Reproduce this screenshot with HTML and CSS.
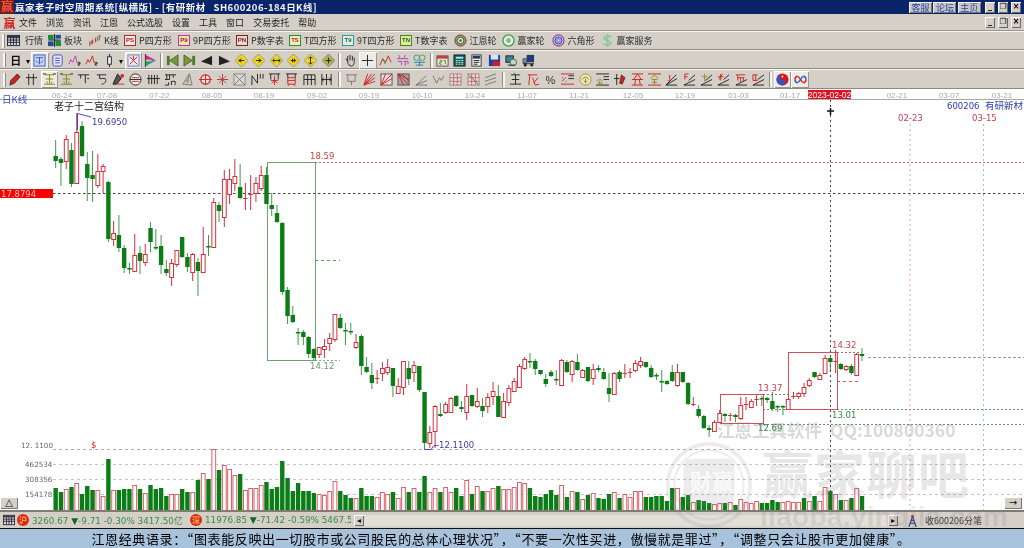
FILE: index.html
```html
<!DOCTYPE html>
<html lang="zh-CN">
<head>
<meta charset="utf-8">
<title>赢家老子时空周期系统</title>
<link rel="stylesheet" href="styles.css">
</head>
<body>
<div class="app">
  <header class="titlebar">
    <span class="logo logo-title">赢</span>
    <span class="title-text">赢家老子时空周期系统[纵横版] - [有研新材 &nbsp; SH600206-184日K线]</span>
    <span class="spring"></span>
    <span class="linkbtn">客服</span><span class="linkbtn">论坛</span><span class="linkbtn">主页</span>
    <span class="winbtns"><span class="winbtn">_</span><span class="winbtn">&#x2750;</span><span class="winbtn">×</span></span>
  </header>
  <nav class="menubar">
    <span class="logo logo-menu">赢</span>
    <span class="menuitem">文件</span><span class="menuitem">浏览</span><span class="menuitem">资讯</span><span class="menuitem">江恩</span><span class="menuitem">公式选股</span><span class="menuitem">设置</span><span class="menuitem">工具</span><span class="menuitem">窗口</span><span class="menuitem">交易委托</span><span class="menuitem">帮助</span>
    <span class="spring"></span>
    <span class="winbtns"><span class="winbtn">_</span><span class="winbtn">&#x2750;</span><span class="winbtn">×</span></span>
  </nav>

  <div class="toolbar row1">
    <span class="grip"></span>
    <span class="tool t-table"><svg class="i" viewBox="0 0 14 14"><rect x=".5" y="1.5" width="13" height="11" fill="#d8dcec" stroke="#223"/><path class="k" d="M1 4h12M1 6.5h12M1 9h12M4 4v8M7 4v8M10 4v8"/><rect x="1" y="2" width="12" height="2" fill="#334"/></svg><b>行情</b></span>
    <span class="tool t-block"><svg class="i" viewBox="0 0 14 14"><rect y="1" width="6" height="5" fill="#1b8a3a"/><rect x="8" y="1" width="6" height="4" fill="#1c4fb0"/><rect y="8" width="6" height="5" fill="#17508a"/><rect x="8" y="7" width="6" height="6" fill="#1b8a3a"/><path class="k" d="M.5 6.5h13M7 0v14"/></svg><b>板块</b></span>
    <span class="tool t-k"><svg class="i" viewBox="0 0 14 14"><path class="r" d="M2 8v5M5 6v5M8 4v5M12 1v6"/><path class="g" d="M3.5 7v4M10 3v5"/><path class="y" d="M13 1v3"/></svg><b>K线</b></span>
    <span class="tool t-p1"><i class="badge bd-red">PS</i><b>P四方形</b></span>
    <span class="tool t-p2"><i class="badge bd-mag">P9</i><b>9P四方形</b></span>
    <span class="tool t-p3"><i class="badge bd-dark">PN</i><b>P数字表</b></span>
    <span class="tool t-t1"><i class="badge bd-grn">TS</i><b>T四方形</b></span>
    <span class="tool t-t2"><i class="badge bd-teal">T9</i><b>9T四方形</b></span>
    <span class="tool t-t3"><i class="badge bd-lime">TN</i><b>T数字表</b></span>
    <span class="tool t-w1"><svg class="i" viewBox="0 0 14 14"><circle cx="7" cy="7" r="6" fill="#8fa070" stroke="#8a2a2a"/><circle cx="7" cy="7" r="3.6" fill="#e8e4c8" stroke="#2a6a3a"/><circle cx="7" cy="7" r="1.4" fill="#555"/></svg><b>江恩轮</b></span>
    <span class="tool t-w2"><svg class="i" viewBox="0 0 14 14"><circle cx="7" cy="7" r="6" fill="#e4efe0" stroke="#3a9a50" stroke-width="1.4"/><circle cx="7" cy="7" r="2.6" fill="#7fbf80"/></svg><b>赢家轮</b></span>
    <span class="tool t-w3"><svg class="i" viewBox="0 0 14 14"><circle cx="7" cy="7" r="6" fill="#d8c8e8" stroke="#a03a8a" stroke-width="1.2"/><circle cx="7" cy="7" r="3.8" fill="#8fb0e0" stroke="#2a4ab0"/><circle cx="7" cy="7" r="1.4" fill="#e8e8f8" stroke="#a03a8a" stroke-width=".6"/></svg><b>六角形</b></span>
    <span class="tool t-w4"><svg class="i" viewBox="0 0 14 14"><path d="M11 3.5C9 1.5 3.500 2 3.500 4.500S10.500 7 10.500 9.500 5 12.500 3 10.500M7 0v14" fill="none" stroke="#8fc89a" stroke-width="2"/></svg><b>赢家服务</b></span>
  </div>

  <div class="toolbar icons row2">
    <span class="grip"></span>
    <span class="ic txt">日</span><span class="caret">▾</span>
    <span class="ic on"><svg class="i" viewBox="0 0 14 14"><rect x="1" y="1" width="12" height="12" fill="#c8d4f4" stroke="#3a58c0"/><path class="b" d="M3 4h8M3 7l3 3M11 7l-3 3M7 4v7"/></svg></span>
    <span class="ic"><svg class="i" viewBox="0 0 14 14"><rect x="2" y="1" width="10" height="12" rx="2" fill="#e4e4f4" stroke="#4a4ac0"/><path class="b" d="M4.500 4.500h5M4.500 7h5M4.500 9.500h5"/></svg></span>
    <span class="ic"><svg class="i" viewBox="0 0 14 14"><path class="m" d="M1 11l2-5 2 3 3-7 2 8"/><path class="k" d="M11 9h2v1.500h-2v1.500h2"/></svg></span>
    <span class="ic"><svg class="i" viewBox="0 0 14 14"><path class="r" d="M1 11l2-5 2 3 3-7 2 8"/><path class="k" d="M11 9h2v1.500h-2v1.500h2"/></svg></span>
    <span class="ic"><svg class="i" viewBox="0 0 14 14"><path class="k" d="M7 0v14"/><rect x="5" y="3" width="4" height="8" fill="#eee" stroke="#222"/></svg></span><span class="caret">▾</span>
    <span class="ic on"><svg class="i" viewBox="0 0 14 14"><rect x="1" y="1" width="12" height="12" fill="#e8e8f0" stroke="#6a7ab0"/><path class="r" stroke-width="1.400" d="M3 3l8 8M11 3l-8 8M7 2v4"/></svg></span>
    <span class="ic"><svg class="i" viewBox="0 0 14 14"><path class="k" d="M1.500 0v14"/><path d="M2 1l11 6H2z" fill="#d020a0"/><path d="M2 7h11L2 13z" fill="#10a0a0"/><path d="M2 6h6v2H2z" fill="#e8d020"/></svg></span>
    <span class="sep s4"></span>
    <span class="ic"><svg class="i" viewBox="0 0 14 14"><path d="M1 2h3v10H1z" fill="#4a7a2a"/><path d="M13 1v12L4 7z" fill="#7a9a30" stroke="#222" stroke-width=".6"/></svg></span>
    <span class="ic"><svg class="i" viewBox="0 0 14 14"><path d="M10 2h3v10h-3z" fill="#4a7a2a"/><path d="M1 1v12l9-6z" fill="#7a9a30" stroke="#222" stroke-width=".6"/></svg></span>
    <span class="ic"><svg class="i" viewBox="0 0 14 14"><path d="M13 2v10L1 8z" fill="#222"/></svg></span>
    <span class="ic"><svg class="i" viewBox="0 0 14 14"><path d="M1 2v10l12-4z" fill="#222"/></svg></span>
    <span class="ic"><svg class="i" viewBox="0 0 14 14"><use href="#dia"/><path class="k" d="M4 7h6M7 5l-3 2 3 2"/></svg></span>
    <span class="ic"><svg class="i" viewBox="0 0 14 14"><use href="#dia"/><path class="k" d="M4 7h6M7 5l3 2-3 2"/></svg></span>
    <span class="ic"><svg class="i" viewBox="0 0 14 14"><use href="#dia"/><path class="k" d="M3 7h8M5 5L3 7l2 2M9 5l2 2-2 2"/></svg></span>
    <span class="ic"><svg class="i" viewBox="0 0 14 14"><use href="#dia"/><path class="k" stroke-width="1.500" d="M4 7h6M6 5v4M8 5v4"/></svg></span>
    <span class="ic"><svg class="i" viewBox="0 0 14 14"><use href="#dia"/><path class="k" d="M7 3v8M5 5l2-2 2 2M5 9l2 2 2-2"/></svg></span>
    <span class="ic"><svg class="i" viewBox="0 0 14 14"><path d="M7 0l7 7-7 7-7-7z" fill="#b0b050" stroke="#666" stroke-width=".6"/><path class="k" d="M4 7h6M7 4v6"/></svg></span>
    <span class="sep s6"></span>
    <span class="ic"><svg class="i" viewBox="0 0 14 14"><path class="k" d="M4 8L2 5M4 8V2M6.500 7V1M9 7V2M11 8V4M4 8c0 3 2 5 4 5s3-2 3-5"/></svg></span>
    <span class="ic on"><svg class="i" viewBox="0 0 14 14"><path class="k" d="M7 1v12M1 7h12"/></svg></span>
    <span class="ic"><svg class="i" viewBox="0 0 14 14"><path class="r" stroke-width="1.200" d="M1 12l3-7 3 4 3-7 3 7"/><path class="g" d="M4 5l3 6"/></svg></span>
    <span class="ic"><svg class="i" viewBox="0 0 14 14"><path class="m" stroke-width="1.200" d="M3 1l1 3M10 1L9 4M1 5h12M2 8h4v4M8 8h5v3M10 8v5"/></svg></span>
    <span class="ic"><svg class="i" viewBox="0 0 14 14"><circle cx="4" cy="4" r="3" fill="none" stroke="#2a9a8a"/><circle cx="10" cy="4" r="3" fill="none" stroke="#40a050"/><path d="M1 9h12M3 12h8M7 7v6" stroke="#3080a0" fill="none"/></svg></span>
    <span class="sep s5"></span>
    <span class="ic"><svg class="i" viewBox="0 0 14 14"><rect x="1" y="2" width="12" height="11" fill="#f0e4d0" stroke="#555"/><rect x="1" y="2" width="12" height="3" fill="#c04040"/><path class="g" d="M4 7h2v2H4v2h2M8 7h2v4"/></svg></span>
    <span class="ic"><svg class="i" viewBox="0 0 14 14"><rect x="1" y="1" width="12" height="12" fill="#155a60" stroke="#222"/><rect x="3" y="3" width="8" height="2" fill="#aee"/><path d="M3 7h2M6 7h2M9 7h2M3 9h2M6 9h2M9 9h2M3 11h2M6 11h2M9 11h2" stroke="#cfc"/></svg></span>
    <span class="ic"><svg class="i" viewBox="0 0 14 14"><rect x="2" y="1" width="10" height="12" fill="#eee" stroke="#334"/><rect x="3" y="2" width="8" height="3" fill="#223a6a"/><path class="k" d="M4 7h6M4 9h6M4 11h4"/></svg></span>
    <span class="ic"><svg class="i" viewBox="0 0 14 14"><rect x="1" y="1" width="12" height="12" fill="#1a3fb0"/><rect x="3" y="1" width="8" height="5" fill="#e4e4e4"/><rect x="5" y="8" width="8" height="5" fill="#d02020"/></svg></span>
    <span class="ic"><svg class="i" viewBox="0 0 14 14"><rect x="1" y="2" width="8" height="7" fill="#4080a0" stroke="#222"/><circle cx="9" cy="9" r="3.500" fill="#c8d8c0" stroke="#2a7a3a"/><path class="k" d="M3 12h8"/></svg></span>
    <span class="ic"><svg class="i" viewBox="0 0 14 14"><rect x="5" y="1" width="8" height="8" fill="#223a7a"/><path d="M1 5h4v5H1z" fill="#7a8aa0" stroke="#222" stroke-width=".6"/><path class="k" d="M1 10.500h12"/><circle cx="3.500" cy="12" r="1.500" fill="#222"/><circle cx="10.500" cy="12" r="1.500" fill="#222"/></svg></span>
  </div>

  <div class="toolbar icons row3">
    <span class="grip"></span>
    <span class="ic"><svg class="i" viewBox="0 0 14 14"><path d="M10 1l3 3-6 7-5 2 1-5z" fill="#d02020" stroke="#222" stroke-width=".8"/></svg></span>
    <span class="ic"><svg class="i" viewBox="0 0 14 14"><path class="k" d="M4 1v12M9 1v12M1 5h12"/></svg></span>
    <span class="ic on"><svg class="i" viewBox="0 0 14 14"><use href="#wang" class="y"/></svg></span>
    <span class="ic"><svg class="i" viewBox="0 0 14 14"><use href="#wang" class="y"/></svg></span>
    <span class="ic"><svg class="i" viewBox="0 0 14 14"><path class="k" d="M1 2h12M4 2v4M9 2v9M11 6h2"/></svg></span>
    <span class="ic"><svg class="i" viewBox="0 0 14 14"><path class="k" d="M2 2h10M5 2v4h6c2 3-1 6-4 6"/></svg></span>
    <span class="ic"><svg class="i" viewBox="0 0 14 14"><path d="M6 1l4 5-5 6H1z" fill="#555" stroke="#222"/><circle cx="11" cy="3" r="2" fill="#e02020"/><path class="r" d="M6 12h7"/></svg></span>
    <span class="ic"><svg class="i" viewBox="0 0 14 14"><circle cx="7" cy="7" r="6" fill="#f4f0f0" stroke="#222"/><path class="k" d="M1 7h12"/><path class="r" d="M3 5h8M3 9h8"/></svg></span>
    <span class="ic"><svg class="i" viewBox="0 0 14 14"><path class="k" d="M2 2v10M5 2v10M8 2v10M11 2v10M0 6h14"/></svg></span>
    <span class="ic"><svg class="i" viewBox="0 0 14 14"><path class="k" d="M1 2h12M3 2v5M6 2v5M10 2v3M1 7h5M1 13h4V10M8 13V9h4v4"/></svg></span>
    <span class="ic"><svg class="i" viewBox="0 0 14 14"><path class="gy" d="M9 1L2 12l10 1zM9 1l-2 8"/><circle cx="7" cy="9" r="1.500" fill="none" stroke="#888"/></svg></span>
    <span class="ic"><svg class="i" viewBox="0 0 14 14"><circle cx="7" cy="7" r="5" fill="#f6e0e0" stroke="#c82020" stroke-width="1.300"/><path class="r" d="M0 7h14M7 2v10"/></svg></span>
    <span class="ic"><svg class="i" viewBox="0 0 14 14"><path class="r" d="M7 1v12M1 7h12"/><path class="gy" d="M3 3l8 8M11 3l-8 8"/></svg></span>
    <span class="ic"><svg class="i" viewBox="0 0 14 14"><rect x="1" y="1" width="12" height="12" fill="#d8d8d8" stroke="#888"/><path class="gy" d="M1 1l12 12M13 1L1 13"/></svg></span>
    <span class="ic"><svg class="i" viewBox="0 0 14 14"><path class="k" d="M1 13V3l6 8V1M10 1v5M13 1v5"/></svg></span>
    <span class="ic"><svg class="i" viewBox="0 0 14 14"><path class="k" d="M1 1h12M3 1v6M11 1v6"/><path class="r" stroke-width="1.300" d="M7 3v10M3 8h8M4 11l3-3 3 3"/></svg></span>
    <span class="ic"><svg class="i" viewBox="0 0 14 14"><path class="k" d="M1 1h12M3 1v4M11 1v4"/><path class="r" stroke-width="1.300" d="M3 5h8v7H3zM3 8h8M5 12l-2 2M9 12l2 2"/></svg></span>
    <span class="ic"><svg class="i" viewBox="0 0 14 14"><path class="k" d="M1 2h12M1 13V2M5 2v11M9 2v11M13 2v11M1 7h12"/></svg></span>
    <span class="ic"><svg class="i" viewBox="0 0 14 14"><path class="k" d="M2 1v12M12 1v12M7 1v12M2 7h10M4 5L2 7l2 2M10 5l2 2-2 2"/></svg></span>
    <span class="sep s8"></span>
    <span class="ic"><svg class="i" viewBox="0 0 14 14"><path class="gy" d="M1 2h12M3 2v7h8V2M7 9v4"/></svg></span>
    <span class="ic"><svg class="i" viewBox="0 0 14 14"><path class="r" d="M1 13L13 1M1 13L13 5M1 13L13 9M1 13L9 1M1 13L5 1"/></svg></span>
    <span class="ic"><svg class="i" viewBox="0 0 14 14"><rect x="1" y="1" width="12" height="12" fill="#ecd8d8" stroke="#555"/><path class="r" d="M1 13L13 1M1 13L13 6M1 13L6 1"/></svg></span>
    <span class="ic"><svg class="i" viewBox="0 0 14 14"><rect x="1" y="1" width="12" height="12" fill="#a8a0a8" stroke="#555"/><path class="r" d="M1 1L13 13M1 1L13 7M1 1L7 13M5 1l8 8"/></svg></span>
    <span class="ic"><svg class="i" viewBox="0 0 14 14"><path class="gy" d="M1 13h12M1 13L12 3M1 13l12-5"/></svg></span>
    <span class="ic"><svg class="i" viewBox="0 0 14 14"><path class="gy" d="M1 3l4 8 3-6 2 3 3-5"/></svg></span>
    <span class="ic"><svg class="i" viewBox="0 0 14 14"><use href="#pink"/></svg></span>
    <span class="ic"><svg class="i" viewBox="0 0 14 14"><use href="#pink"/><path class="gy" d="M1 1l12 12"/></svg></span>
    <span class="ic"><svg class="i" viewBox="0 0 14 14"><path class="gy" d="M1 5l12-4M1 9l12-4M1 13l12-4"/></svg></span>
    <span class="sep s8"></span>
    <span class="ic"><svg class="i" viewBox="0 0 14 14"><path class="k" d="M2 2h10M3 7h8M1 12h12M7 2v10M5 0l2 2"/></svg></span>
    <span class="ic"><svg class="i" viewBox="0 0 14 14"><path class="r" stroke-width="1.200" d="M1 2h10M3 2L2 13M6 5l3 8 4-1M7 11l5-6"/></svg></span>
    <span class="ic pct">%</span>
    <span class="ic"><svg class="i" viewBox="0 0 14 14"><path class="k" d="M8 3h6M8 6h6"/><path class="r" d="M0 1h14M0 12h14M1 9l4-4M1 5h1M5 9h1"/></svg></span>
    <span class="ic"><svg class="i" viewBox="0 0 14 14"><circle cx="7" cy="7" r="6" fill="#f0e8b8" stroke="#a09040"/><path class="y" d="M3 7l4-3 4 3M5 9h4M7 6v5"/></svg></span>
    <span class="ic"><svg class="i" viewBox="0 0 14 14"><path class="k" d="M0 1h14M8 4h6M8 7h6"/><path class="y" stroke-width="1.300" d="M1 9l3-3 3 3M2 11h5M4 8v4"/><path class="k" d="M0 13h14"/></svg></span>
    <span class="ic"><svg class="i" viewBox="0 0 14 14"><path class="k" stroke-width="1.400" d="M4 1v12M1 6h6"/><path d="M9 2l4 3-3 7-3-1z" fill="#d02020" stroke="#222" stroke-width=".6"/></svg></span>
    <span class="ic"><svg class="i" viewBox="0 0 14 14"><path class="r" d="M1 1h12M1 13h12M1 7h12M7 1L3 7M7 1l4 6M5 7l-1 6M9 7l1 6"/></svg></span>
    <span class="ic"><svg class="i" viewBox="0 0 14 14"><path class="r" d="M0 1h14M0 13h14"/><path class="y" stroke-width="1.200" d="M7 2L3 6M7 2l4 4M4 7h6M7 7v5M4 10h6"/></svg></span>
    <span class="ic"><svg class="i" viewBox="0 0 14 14"><path class="k" d="M1 13h12M1 13L13 6M1 13L12 2"/><path class="r" d="M5 2v5c0 2-2 2-2 1"/></svg></span>
    <span class="ic"><svg class="i" viewBox="0 0 14 14"><path class="k" d="M1 13h12M1 13L13 7M6 8l7-6"/><path class="r" stroke-width="1.300" d="M2 7V1h4M2 4h3"/></svg></span>
    <span class="ic"><svg class="i" viewBox="0 0 14 14"><path class="k" d="M1 13h12M1 13L13 7M6 8l7-6"/><path class="y" stroke-width="1.300" d="M5 1v8M2 3l3 2 3-2"/></svg></span>
    <span class="ic"><svg class="i" viewBox="0 0 14 14"><path class="k" d="M1 13h12M1 13L13 7M7 7l6-5"/><path class="r" stroke-width="1.300" d="M4 1v7M1 4h6M6 1L2 7"/></svg></span>
    <span class="ic"><svg class="i" viewBox="0 0 14 14"><path class="k" d="M1 13h12M1 13L13 7"/><path class="r" stroke-width="1.200" d="M1 2h10M3 2v6M3 5h7M6 5v5M9 5v4"/></svg></span>
    <span class="ic"><svg class="i" viewBox="0 0 14 14"><path class="k" d="M1 13h12M1 13L13 7M6 7l7-5"/><path class="r" stroke-width="1.200" d="M1 2h5M1 2v6h5M4 2v6"/></svg></span>
    <span class="sep s7"></span>
    <span class="ic on"><svg class="i" viewBox="0 0 14 14"><circle cx="7" cy="7" r="6.500" fill="#d81818"/><path d="M7 .5a6.500 6.500 0 0 0 0 13 3.250 3.250 0 0 0 0-6.500 3.250 3.250 0 0 1 0-6.500z" fill="#2a5ac0"/><circle cx="7" cy="3.800" r="1" fill="#fff"/><circle cx="7" cy="10.200" r="1" fill="#d81818"/></svg></span>
    <span class="ic on"><svg class="i" viewBox="0 0 14 14"><path d="M1 7c1-5 4-4 6 0s5 5 6 0" fill="none" stroke="#e02020" stroke-width="1.600"/><path d="M1 7c1 5 4 4 6 0s5-5 6 0" fill="none" stroke="#2a5ac0" stroke-width="1.600"/></svg></span>
  </div>

  <main class="chart">
    <svg class="chart-svg" id="chart" viewBox="0 89 1024 421" width="1024" height="421" xmlns="http://www.w3.org/2000/svg">
      <g id="static"></g>
      <g id="bars"></g>
      <g id="candles"></g>
    </svg>
    <span class="sizebtn sb-left">△</span>
    <span class="sizebtn sb-right">→</span>
  </main>

  <footer class="statusbar">
    <svg class="i st-cal" viewBox="0 0 14 14"><rect x=".5" y="1.500" width="13" height="11" fill="#d8dcec" stroke="#223"/><rect x="1" y="2" width="12" height="2" fill="#334"/><path class="k" d="M1 6h12M1 8.500h12M4 4v8M7 4v8M10 4v8"/></svg>
    <span class="mkt">沪</span>
    <span class="idx i1">3260.67 <em>▼</em>-9.71 -0.30% 3417.50亿</span>
    <span class="mkt m2">深</span>
    <span class="idx i2">11976.85 <em>▼</em>-71.42 -0.59% 5467.5</span>
    <div class="scroll">
      <span class="sarrow">◂</span><span class="strack"></span><span class="sarrow">▸</span>
    </div>
    <svg class="i st-tower" viewBox="0 0 14 14"><path d="M7 3L3 14M7 3l4 11M4.500 10h5M5.500 7h3" fill="none" stroke="#2a3a8a" stroke-width="1.200"/><circle cx="7" cy="2.500" r="1.500" fill="#d02020"/></svg>
    <span class="tick">收600206分笔</span>
  </footer>

  <div class="quote">江恩经典语录：“图表能反映出一切股市或公司股民的总体心理状况”，“不要一次性买进，傲慢就是罪过”，“调整只会让股市更加健康”。</div>
</div>

<div class="wm wm-line">江恩工具软件 &nbsp;QQ:100800360</div>
<svg class="wm wm-ring" viewBox="0 0 96 96" xmlns="http://www.w3.org/2000/svg"><circle cx="48" cy="48" r="44" fill="none" stroke="#8a8a8a" stroke-width="4"/><circle cx="48" cy="48" r="37" fill="none" stroke="#8a8a8a" stroke-width="2"/><rect x="21" y="20" width="54" height="50" rx="8" fill="#8a8a8a"/></svg>
<div class="wm wm-seal">财赢</div>
<div class="wm wm-big">赢家聊吧</div>
<div class="wm wm-url">liaoba.yingjia.com</div>

<svg class="sprites" width="0" height="0" xmlns="http://www.w3.org/2000/svg">
  <symbol id="dia" viewBox="0 0 14 14"><path d="M7 0l7 7-7 7-7-7z" fill="#f0d820" stroke="#777" stroke-width=".7"/></symbol>
  <symbol id="wang" viewBox="0 0 14 14"><path d="M2 2h10M3 6.500h8M1 12h12M7 2v10M4 9l1 2M10 9l-1 2" fill="none" stroke="#8a8a20" stroke-width="1.100"/><path d="M0 1h3M11 1h3" stroke="#222" fill="none"/></symbol>
  <symbol id="pink" viewBox="0 0 14 14"><rect x="1" y="1" width="12" height="12" fill="#ecd8d8" stroke="#b08080"/><path d="M1 5h12M1 9h12M5 1v12M9 1v12" stroke="#b07070" fill="none"/></symbol>
</svg>
<script src="chart.js"></script>
</body>
</html>
```

FILE: styles.css
```css
html, body { margin: 0; padding: 0; width: 1024px; height: 548px; overflow: hidden; background: #d4d0c8; }
body { position: relative; font-family: "Noto Sans CJK SC", "Liberation Sans", sans-serif; color: #222; font-size: 9px; }
.app { display: flex; flex-direction: column; width: 1024px; height: 548px; filter: blur(.3px); }
.spring { flex: 1; }
.sprites { position: absolute; }

.titlebar { display: flex; align-items: center; height: 14px; background: #0a246a; color: #f4f4f4; flex: none; }
.logo { color: #d01818; font-weight: 700; line-height: 1; text-align: center; }
.logo-title { width: 14px; font-size: 12px; background: #70201a; color: #ff5040; height: 14px; margin-right: 1px; }
.title-text { font-size: 9.500px; font-weight: 700; letter-spacing: .46px; white-space: pre; line-height: 14px; }
.linkbtn { width: 23px; height: 11px; margin: 0 1.300px 0 0; background: #c8c6c0; color: #2a3fa8; font-size: 9px; line-height: 11px; text-align: center; box-shadow: inset 1px 1px #f4f4f4, inset -1px -1px #777; }
.winbtns { display: flex; gap: 3px; margin-left: 3px; margin-right: 3px; }
.winbtn { width: 10px; height: 11px; background: #d4d0c8; color: #000; font-family: "DejaVu Sans", sans-serif; font-size: 8px; font-weight: 700; line-height: 10px; text-align: center; box-shadow: inset 1px 1px #fff, inset -1px -1px #666; }

.menubar { display: flex; align-items: center; height: 17px; flex: none; gap: 9px; padding-top: 1px; box-sizing: border-box; border-bottom: 1px solid #9a968c; }
.logo-menu { width: 13px; font-size: 12px; margin: 0 -6px 0 3px; }
.menuitem { font-size: 9px; line-height: 14px; white-space: nowrap; color: #1c1c1c; }

.toolbar { display: flex; align-items: center; height: 19px; flex: none; box-sizing: border-box; border-top: 1px solid #f6f5f1; border-bottom: 1px solid #8e8a80; }
.grip { width: 2px; height: 14px; margin-left: 2px; background: #f6f5f1; border-right: 1px solid #8e8a80; flex: none; }
.i { width: 13px; height: 13px; display: block; flex: none; }
.k, .r, .g, .y, .m, .b, .gy { fill: none; stroke-width: 1; }
.k { stroke: #222; } .r { stroke: #d02020; } .g { stroke: #2a8a3a; } .y { stroke: #8a8a20; } .m { stroke: #b040b0; } .b { stroke: #3a50c0; } .gy { stroke: #777; }

.tool { display: flex; align-items: center; gap: 3px; flex: none; box-sizing: border-box; }
.tool b { font-weight: 400; font-size: 9px; color: #2a2a2a; white-space: nowrap; }
.badge { display: block; width: 12px; height: 11px; box-sizing: border-box; border: 1px solid; font-style: normal; font-weight: 700; font-family: "Liberation Sans", sans-serif; font-size: 6px; line-height: 9px; text-align: center; }
.bd-red { border-color: #b02a2a; color: #a02020; background: #f6e8e4; }
.bd-mag { border-color: #c030c0; color: #802080; background: #f4e890; }
.bd-dark { border-color: #802020; color: #802020; background: #e8dcd0; }
.bd-grn { border-color: #2a8a3a; color: #c02020; background: #eef0b8; }
.bd-teal { border-color: #20a0a0; color: #106060; background: #f0e8e0; }
.bd-lime { border-color: #3a8a2a; color: #1a6a2a; background: #e8e890; }
.t-table { margin-left: 2px; width: 41px; gap: 5px; }
.t-block { width: 40px; }
.t-k { width: 36px; }
.t-p1 { width: 54px; }
.t-p2 { width: 58px; }
.t-p3 { width: 53px; }
.t-t1 { width: 53px; }
.t-t2 { width: 58px; }
.t-t3 { width: 53.500px; }
.t-w1 { width: 48px; }
.t-w2 { width: 50px; }
.t-w3 { width: 49px; }
.t-w4 { width: 56px; }

.icons { padding-left: 1px; padding-top: 1px; }
.row3 { height: 20px; }
.ic { width: 17.330px; height: 17px; display: flex; align-items: center; justify-content: center; flex: none; box-sizing: border-box; }
.ic.on { background: #ecebe6; box-shadow: inset 1px 1px #fff, inset -1px -1px #9a968c; }
.ic.txt { font-weight: 700; font-size: 11px; color: #111; margin-left: 1px; }
.ic.pct { font-family: "Liberation Sans", sans-serif; font-size: 11px; color: #333; }
.caret { width: 7px; font-size: 8px; text-align: center; color: #111; flex: none; }
.sep { height: 15px; flex: none; }
.sep::before { content: ""; display: block; width: 2px; height: 15px; margin: 0 auto; background: #f6f5f1; border-left: 1px solid #8e8a80; }
.s4 { width: 4px; } .s5 { width: 5px; } .s6 { width: 5px; } .s7 { width: 7px; } .s8 { width: 8px; }

.chart { position: relative; flex: none; height: 421px; background: #fff; }
.chart-svg { display: block; }
.sizebtn { position: absolute; bottom: 1px; height: 12px; width: 18px; background: #d4d0c8; box-shadow: inset 1px 1px #fff, inset -1px -1px #777; color: #111; text-align: center; font-family: "DejaVu Sans", sans-serif; font-size: 10px; line-height: 12px; }
.sb-left { left: 0; }
.sb-right { right: 2px; }

.statusbar { display: flex; align-items: center; height: 18px; flex: none; box-sizing: border-box; border-top: 2px solid #807c74; padding-left: 3px; background: #d4d0c8; }
.st-cal { width: 12px; height: 12px; }
.mkt { width: 12px; height: 12px; border-radius: 50%; background: #e02818; color: #f4e060; font-size: 8px; line-height: 12px; text-align: center; margin-left: 2px; flex: none; }
.m2 { margin-left: 0; }
.idx { font-family: "DejaVu Sans", sans-serif; font-size: 8.800px; color: #3a8a4a; white-space: nowrap; flex: none; margin-left: 3px; }
.idx em { font-style: normal; color: #0a6a1a; font-size: 9px; }
.i1 { width: 158px; }
.i2 { width: 146px; overflow: hidden; }
.scroll { display: flex; width: 544px; height: 11px; margin-left: 3px; flex: none; }
.sarrow { width: 10px; background: #d4d0c8; box-shadow: inset 1px 1px #fff, inset -1px -1px #666; color: #111; font-family: "DejaVu Sans", sans-serif; font-size: 8px; line-height: 11px; text-align: center; flex: none; }
.strack { flex: 1; background: #e2dfd8; }
.st-tower { margin-left: 8px; }
.tick { margin-left: 6px; font-size: 9px; color: #3a3a3a; white-space: nowrap; }

.quote { flex: 1; background: #a9c2dc; border-top: 1px solid #111; color: #000; font-size: 13px; letter-spacing: .62px; line-height: 19px; text-align: center; white-space: nowrap; padding-right: 22px; }

.wm { position: absolute; pointer-events: none; white-space: nowrap; }
.wm-line { left: 717px; top: 420px; font-size: 17.500px; font-weight: 700; line-height: 20px; color: rgba(120,120,120,.28); }
.wm-ring { left: 662px; top: 440px; width: 94px; height: 90px; opacity: .16; }
.wm-seal { left: 687px; top: 460px; width: 50px; text-align: center; font-size: 22px; line-height: 40px; font-weight: 700; color: rgba(255,255,255,.7); }
.wm-big { left: 762px; top: 441px; font-size: 51px; font-weight: 700; line-height: 62px; letter-spacing: 1px; color: rgba(120,120,120,.18); }
.wm-url { left: 760px; top: 500px; height: 28px; overflow: hidden; font-family: "Liberation Sans", sans-serif; font-size: 28px; font-weight: 700; line-height: 34px; letter-spacing: .3px; color: rgba(120,120,120,.16); }

.tx { font-family: "DejaVu Sans", sans-serif; font-size: 8.500px; }
.tx-sm { font-family: "DejaVu Sans", sans-serif; font-size: 7.200px; }
.ax { font-family: "Liberation Sans", sans-serif; font-size: 8px; fill: #a8a8a8; text-anchor: middle; }
.cj { font-family: "Noto Sans CJK SC", sans-serif; font-size: 9.500px; }
.cj-lg { font-family: "Noto Sans CJK SC", sans-serif; font-size: 10px; }
```

FILE: chart.js
```js
// [type, high, bodyTop, bodyBottom, low]  (page y coordinates)
var K = "g 140 156 161 168,g 157 159 163 186,r 135 139 161 169,g 143 150 184 187,r 113 132 183 183,g 121 126 156 157,g 152 164 178 201,g 151 175 179 202,r 154 171 185 188,r 164 166 171 193,g 181 182 239 242,r 221 233 239 246,g 215 235 248 252,g 245 248 268 273,g 263 268 269 274,r 234 255 271 272,g 246 253 261 274,r 244 254 262 266,g 222 228 242 252,g 229 247 248 250,g 235 246 265 274,g 260 269 273 276,r 259 263 277 286,r 250 250 264 267,g 237 237 257 258,g 253 257 267 272,r 253 254 272 281,g 258 262 271 296,r 227 254 272 272,g 235 246 247 256,r 198 202 247 247,g 202 205 211 222,r 170 179 217 227,r 169 179 194 204,r 159 176 183 191,g 164 187 198 199,r 183 198 199 210,r 175 194 195 210,r 177 183 193 202,r 166 175 188 191,g 167 175 204 204,g 193 205 209 216,g 205 213 222 223,g 222 223 292 295,g 287 290 316 324,g 306 315 322 323,g 328 332 333 345,g 330 332 337 345,g 336 337 354 358,g 348 349 358 360,r 347 347 354 358,r 339 346 349 358,r 333 338 343 351,r 314 314 339 342,g 314 318 328 329,g 323 330 331 345,g 323 331 332 335,r 334 342 347 349,g 334 336 366 375,g 357 367 372 373,g 363 375 383 389,r 370 378 379 384,r 362 368 373 381,r 359 367 372 375,g 368 368 386 397,r 378 386 393 394,r 361 361 387 395,g 361 368 379 385,r 361 365 372 382,g 366 366 390 392,g 392 392 443 449,r 426 432 443 448,r 405 406 431 448,g 403 414 416 417,r 402 404 412 414,r 397 398 412 413,g 395 396 406 407,g 401 407 409 412,r 384 396 412 420,g 395 395 406 407,r 388 401 406 408,g 398 406 411 417,r 393 397 406 413,r 382 391 396 405,g 385 396 417 417,r 393 401 417 418,r 385 388 402 406,r 378 381 391 392,r 364 366 387 388,r 357 359 368 370,g 353 361 362 368,g 359 361 369 375,g 370 370 374 375,g 374 379 384 387,g 370 372 376 377,g 370 379 380 385,r 359 360 385 385,g 360 362 372 373,r 360 361 374 382,g 354 362 370 371,r 369 370 377 378,g 367 367 381 382,r 364 369 378 385,g 365 368 370 372,g 368 372 379 380,g 373 388 394 402,r 372 373 394 395,g 370 372 379 382,r 364 373 374 378,r 368 372 373 378,r 360 363 370 372,r 357 361 365 368,g 362 362 367 368,g 365 368 377 378,g 373 375 376 380,g 370 381 382 392,g 380 381 384 385,g 365 372 381 382,r 364 372 385 387,g 372 372 382 383,g 382 383 404 405,r 397 404 405 406,g 405 409 416 418,g 415 416 428 429,g 425 428 430 437,r 420 422 431 432,r 410 413 422 423,g 413 414 416 422,r 413 415 416 421,g 414 415 417 422,r 397 405 418 420,r 397 404 405 410,r 399 401 407 408,r 395 399 400 406,g 396 398 399 406,g 397 398 400 403,g 392 401 409 411,g 405 406 407 412,g 405 406 407 415,r 399 399 409 409,r 392 396 397 399,r 392 393 396 399,r 383 387 393 397,r 378 380 385 387,g 372 372 377 378,r 373 375 379 380,r 355 358 373 374,g 355 358 362 372,r 350 361 362 373,g 363 364 369 370,r 365 366 369 371,g 364 366 373 375,r 353 354 375 375,g 348 354 356 361".split(",");

// volume: type + bar-top offset, in two runs measured from different bases
var V1 = "g175 g187 r178 g170 r160 g192 g167 g180 r181 r198 g87 r181 g180 g176 g176 r166 g178 r190 g165 g176 g174 g198 r192 r192 g178 g187 r185 g150 r128 g148 r58 g120 r106 r118 r135 g133 r181 r175 r175 r165 g157 g176 g171 g92 g145 g184 g160 g184 g184 g188 r193 r196 r183 r153 g182 g195 g205 r205 g175 g198 g198 r202 r185 r193 g187 r203 r172 g187 r175 g187 g138 r187 r175 g185 r172 r185 g175 g198 r150 g192 r167 g183 r183 r175 g167 r178 r178".split(" ");
var V2 = "r262 r245 r248 g265 g287 g292 g282 g270 g285 r255 g290 r272 g277 r298 g285 r280 g295 g297 g282 r275 g293 r282 r292 r273 r273 g292 g292 g287 g287 g302 g265 r265 g290 g285 r307 g300 g303 g308 r312 r308 g310 r307 g315 r298 r305 r310 r303 g308 g308 g300 g306 r306 r303 r306 r306 g295 r303 g288 r302 r260 g273 r283 g300 r300 g295 r265 g288".split(" ");
var V = V1.map(function (s) { return [s[0], 430 + s.slice(1) / 3]; })
  .concat(V2.map(function (s) { return [s[0], 400 + s.slice(1) / 3]; }));

var NS = "http://www.w3.org/2000/svg";
var GREEN = "#0b7d16", GWICK = "#3f9a4a", RED = "#d2303c";

function el(parent, name, attrs, text) {
  var n = document.createElementNS(NS, name);
  for (var a in attrs) n.setAttribute(a, attrs[a]);
  if (text) n.textContent = text;
  parent.appendChild(n);
  return n;
}
function cx(i) { return 55.67 + 5.27 * i; }
function line(g, x1, y1, x2, y2, color, dash, w) {
  var a = { x1: x1, y1: y1, x2: x2, y2: y2, stroke: color, "stroke-width": w || 1 };
  if (dash) a["stroke-dasharray"] = dash;
  el(g, "line", a);
}
function txt(g, x, y, s, color, cls) {
  el(g, "text", { x: x, y: y, fill: color, "class": cls || "tx" }, s);
}

var st = document.getElementById("static");
var cg = document.getElementById("candles");
var vg = document.getElementById("bars");

// date axis
line(st, 0, 99.5, 1024, 99.5, "#a8a8a8");
[["06-24",62],["07-08",107],["07-22",159.5],["08-05",212],["08-19",264],["09-02",317],["09-19",369],["10-10",422],["10-24",475],["11-07",527],["11-21",579],["12-05",633],["12-19",685],["01-03",738.5],["01-17",790],["02-21",897],["03-07",949],["03-21",1002]].forEach(function (d) {
  txt(st, d[1], 98, d[0], "#a8a8a8", "ax");
});
el(st, "rect", { x: 808, y: 90, width: 43, height: 9, fill: "#e01020" });
el(st, "text", { x: 829.5, y: 98, "class": "ax", style: "fill:#fff;font-size:8.5px" }, "2023-02-02");

// grid / dashed lines
var D = "3 3";
line(st, 53, 193.5, 1024, 193.5, "#444", "2.5 2.5");
line(st, 53, 449.5, 1024, 449.5, "#b0b0b0", D);
[464.5, 479.5, 494.5].forEach(function (y) { line(st, 53, y, 1024, y, "#c4c4c4", D); });
line(st, 315, 162.5, 1024, 162.5, "#d85a64", "2 2");
line(st, 315, 260.5, 340, 260.5, "#5aa05a", D);
line(st, 315, 360.5, 340, 360.5, "#8aa88a", "2 2");
line(st, 837, 409.5, 1024, 409.5, "#5aa05a", "2 2");
line(st, 763, 424.5, 1024, 424.5, "#5aa05a", "2 2");
line(st, 868, 357.5, 1024, 357.5, "#999", "3 2");
line(st, 763, 394.5, 788, 394.5, "#d85a64", "2 2");
line(st, 763, 409.5, 788, 409.5, "#d85a64", "2 2");
line(st, 837, 352.5, 860, 352.5, "#d85a64", "2 2");
line(st, 837, 381.5, 860, 381.5, "#d85a64", D);
line(st, 910, 124, 910, 510, "#e0a0a8", "2 3");
line(st, 983.5, 124, 983.5, 510, "#90c4dc", "2 3");

// boxes
el(st, "rect", { x: 267.5, y: 162.5, width: 48, height: 198, fill: "none", stroke: "#6aa46a" });
el(st, "rect", { x: 720.5, y: 394.5, width: 43, height: 29, fill: "none", stroke: "#d2505a" });
el(st, "rect", { x: 788.5, y: 352.5, width: 49, height: 57, fill: "none", stroke: "#d2505a" });

// volume bars
V.forEach(function (b, i) {
  var x = cx(i), y = Math.round(b[1]);
  if (b[0] === "g") el(vg, "rect", { x: x - 2.2, y: y, width: 4.4, height: 510 - y, fill: "#0b7d16" });
  else el(vg, "rect", { x: x - 1.9, y: y + 0.5, width: 3.8, height: 510 - y, fill: "#fff", stroke: "#d8606a" });
});

// candles
K.forEach(function (row, i) {
  var p = row.split(" "), x = cx(i), hi = +p[1], top = +p[2], bot = +p[3], lo = +p[4];
  if (p[0] === "g") {
    line(cg, x, hi, x, lo, GWICK);
    el(cg, "rect", { x: x - 2.2, y: top, width: 4.4, height: Math.max(bot - top, 1.5), fill: GREEN });
  } else {
    line(cg, x, hi, x, lo, RED);
    if (bot - top < 2) line(cg, x - 2.2, top + 0.5, x + 2.2, top + 0.5, RED);
    else el(cg, "rect", { x: x - 1.9, y: top + 0.5, width: 3.8, height: bot - top, fill: "#fff", stroke: RED });
  }
});

// marks
line(cg, 830.5, 100, 830.5, 510, "#444", "2 3");
el(cg, "path", { d: "M827 111h7M830.500 108v7", stroke: "#111", "stroke-width": 1.5, fill: "none" });
el(cg, "path", { d: "M77.500 130V113.500L91 117", stroke: "#4a4ac0", fill: "none" });
el(cg, "path", { d: "M424 449.500h7l3-4h3", stroke: "#4a4ac0", fill: "none" });

// labels
txt(cg, 54, 110, "老子十二宫结构", "#222", "cj-lg");
txt(st, 2, 103, "日K线", "#3a4ab8", "cj");
txt(cg, 92, 125, "19.6950", "#3a3aa8");
el(st, "rect", { x: 0, y: 189, width: 53, height: 9, fill: "#f00" });
txt(st, 1, 197, "17.8794", "#e8c8c8");
txt(st, 310, 159, "18.59", "#c8404c");
txt(st, 310, 369, "14.12", "#6a9a6a");
txt(st, 21, 448, "12. 1100", "#666", "tx-sm");
txt(st, 91, 448, "$", "#d02020");
txt(st, 436, 448, "-12.1100", "#3a3aa8");
txt(st, 25, 467, "462534", "#666", "tx-sm");
txt(st, 25, 482, "308356", "#666", "tx-sm");
txt(st, 25, 497, "154178", "#666", "tx-sm");
txt(st, 947, 109, "600206", "#2a3ab0");
txt(st, 985, 109, "有研新材", "#2a3ab0", "cj");
txt(st, 898, 121, "02-23", "#c8404c");
txt(st, 972, 121, "03-15", "#c8404c");
txt(cg, 758, 391, "13.37", "#c8404c");
txt(cg, 758, 431, "12.69", "#3a8a4a");
txt(cg, 832, 348, "14.32", "#c8404c");
txt(cg, 832, 418, "13.01", "#3a8a4a");
```
